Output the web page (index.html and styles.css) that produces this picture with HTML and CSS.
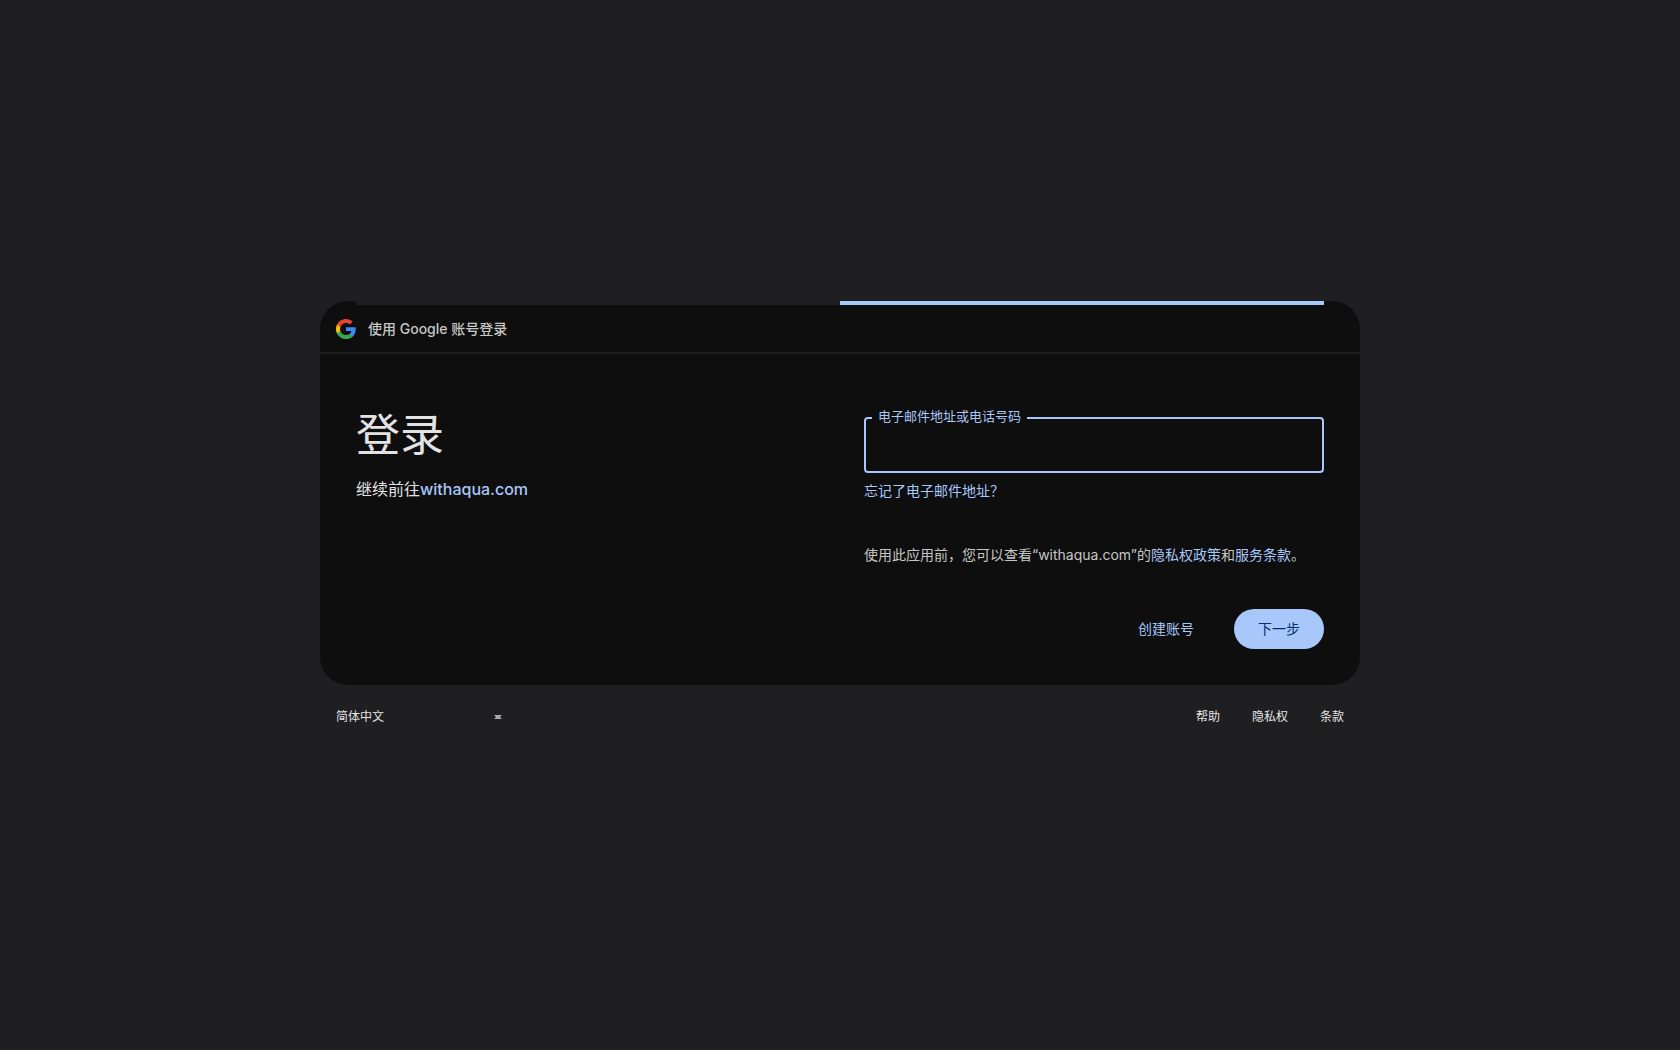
FILE: index.html
```html
<!DOCTYPE html>
<html lang="zh-CN">
<head>
    <meta charset="UTF-8">
    <meta name="viewport" content="width=device-width, initial-scale=1.0">
    <title>登录 - Google 账号</title>
    <link rel="stylesheet" href="styles.css">
</head>
<body>
    <div class="page">
        <main class="card">
            <div class="progress"><div class="progress-bar"></div></div>
            <header class="card-header">
                <svg class="logo" viewBox="0 0 48 48" aria-hidden="true">
                    <path fill="#4285F4" d="M45.12 24.5c0-1.56-.14-3.06-.4-4.5H24v8.51h11.84c-.51 2.75-2.06 5.08-4.39 6.64v5.52h7.11c4.16-3.83 6.56-9.47 6.56-16.17z"/>
                    <path fill="#34A853" d="M24 46c5.94 0 10.92-1.97 14.56-5.33l-7.11-5.52c-1.97 1.32-4.49 2.1-7.45 2.1-5.73 0-10.58-3.87-12.31-9.07H4.34v5.7C7.96 41.07 15.4 46 24 46z"/>
                    <path fill="#FBBC05" d="M11.69 28.18C11.25 26.86 11 25.45 11 24s.25-2.86.69-4.18v-5.7H4.34C2.85 17.09 2 20.45 2 24c0 3.55.85 6.91 2.34 9.88l7.35-5.7z"/>
                    <path fill="#EA4335" d="M24 10.75c3.23 0 6.13 1.11 8.41 3.29l6.31-6.31C34.91 4.18 29.93 2 24 2 15.4 2 7.96 6.93 4.34 14.12l7.35 5.7c1.73-5.2 6.58-9.07 12.31-9.07z"/>
                </svg>
                <span>使用 Google 账号登录</span>
            </header>
            <div class="card-body">
                <section class="intro">
                    <h1>登录</h1>
                    <p>继续前往<a href="#">withaqua.com</a></p>
                </section>
                <form class="login-form">
                    <fieldset class="field">
                        <legend><label for="identifier">电子邮件地址或电话号码</label></legend>
                        <input type="text" id="identifier" autocomplete="username">
                    </fieldset>
                    <a class="forgot" href="#">忘记了电子邮件地址？</a>
                    <p class="notice">使用此应用前，您可以查看“withaqua.com”的<a href="#">隐私权政策</a>和<a href="#">服务条款</a>。</p>
                    <div class="actions">
                        <button type="button" class="btn">创建账号</button>
                        <button type="button" class="btn btn-primary">下一步</button>
                    </div>
                </form>
            </div>
        </main>
        <footer class="footer">
            <div class="language">
                <select aria-label="更改语言">
                    <option selected>简体中文</option>
                    <option>English</option>
                </select>
                <svg class="arrow" viewBox="0 0 8 6" aria-hidden="true">
                    <path d="M0 1h8L6 3l2 2H0l2-2z"/>
                </svg>
            </div>
            <nav class="links">
                <a href="#">帮助</a>
                <a href="#">隐私权</a>
                <a href="#">条款</a>
            </nav>
        </footer>
    </div>
</body>
</html>
```
FILE: styles.css
```css
* {
    box-sizing: border-box;
}
body {
    margin: 0;
    background: #1f1f21;
    color: #e3e3e3;
    font-family: Inter, "Noto Sans CJK SC", sans-serif;
    font-size: 14px;
    line-height: 20px;
}
h1, p {
    margin: 0;
    font-weight: 400;
}
a {
    color: #a8c7fa;
    text-decoration: none;
}
button, input, select {
    font: inherit;
}
.page {
    display: flex;
    flex-direction: column;
    justify-content: center;
    min-height: 100vh;
    max-width: 1040px;
    margin: 0 auto;
}
.card {
    background: #0e0e0e;
    border-radius: 28px;
}
.progress {
    height: 4px;
    margin: 0 36px;
    background: #1f1f21;
}
.progress-bar {
    width: 50%;
    height: 100%;
    margin-left: auto;
    background: #a8c7fa;
}
.card-header {
    display: flex;
    align-items: center;
    gap: 11px;
    height: 49px;
    padding: 0 15px;
    border-bottom: 2px solid #1f1f21;
    color: #c4c7c5;
    font-weight: 500;
}
.logo {
    width: 22px;
    height: 22px;
}
.card-body {
    display: grid;
    grid-template-columns: 1fr 1fr;
    gap: 48px;
    padding: 52px 36px 36px;
}
.intro {
    padding-top: 3px;
}
.intro h1 {
    font-size: 44px;
    line-height: 52px;
}
.intro p {
    margin-top: 16px;
    font-size: 16px;
    line-height: 24px;
}
.intro a {
    font-weight: 500;
}
.field {
    height: 67px;
    margin: 0;
    padding: 0 12px;
    border: 2px solid #a8c7fa;
    border-radius: 4px;
}
.field legend {
    padding: 0 6px 3px;
    margin-left: -6px;
    color: #a8c7fa;
    font-size: 13px;
}
.field input {
    width: 100%;
    padding: 8px 0;
    border: none;
    outline: none;
    background: transparent;
    color: #e3e3e3;
    font-size: 16px;
}
.forgot {
    display: block;
    width: fit-content;
    margin-top: 8px;
}
.notice {
    margin-top: 44px;
    color: #c4c7c5;
}
.actions {
    display: flex;
    justify-content: flex-end;
    gap: 16px;
    margin-top: 44px;
}
.btn {
    height: 40px;
    padding: 0 24px;
    border: none;
    border-radius: 20px;
    background: transparent;
    color: #a8c7fa;
    cursor: pointer;
}
.btn-primary {
    background: #a8c7fa;
    color: #062e6f;
}
.footer {
    display: flex;
    align-items: center;
    justify-content: space-between;
    height: 64px;
    padding: 0 16px;
    font-size: 12px;
}
.language {
    display: flex;
    align-items: center;
}
.language select {
    width: 158px;
    padding: 0;
    border: none;
    appearance: none;
    background: transparent;
    color: #e3e3e3;
}
.arrow {
    width: 8px;
    height: 6px;
    fill: #a9abaa;
}
.links {
    display: flex;
    gap: 32px;
}
.links a {
    color: #e3e3e3;
}
```
